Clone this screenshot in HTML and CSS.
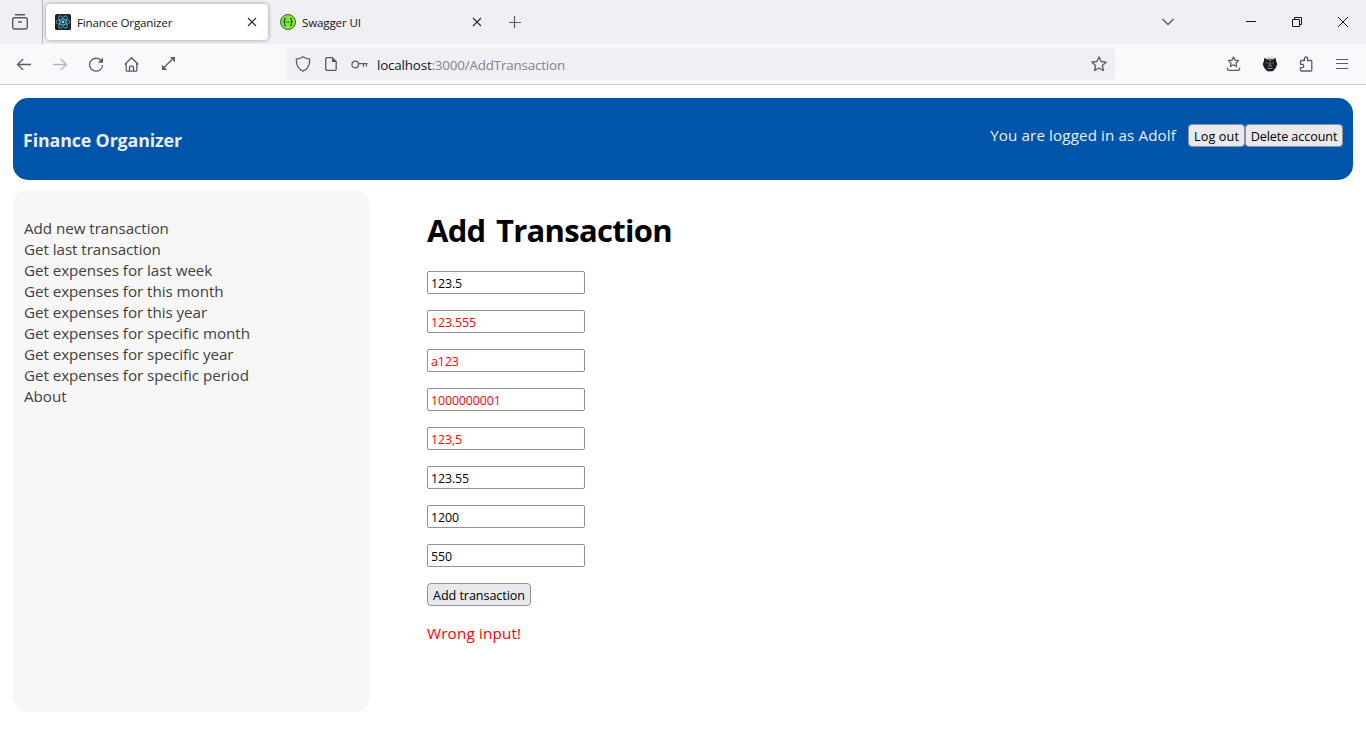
FILE: index.html
```html
<!DOCTYPE html>
<html lang="en">
<head>
<meta charset="utf-8">
<title>Finance Organizer</title>
<link rel="stylesheet" href="styles.css">
</head>
<body>
<div class="tabbar">
  <div class="tabs-lead">
    <svg class="ic" width="18" height="18" viewBox="0 0 18 18"><path d="M4 1.700h10M3 4.700h12a1.300 1.300 0 0 1 1.300 1.300v8a2 2 0 0 1-2 2H3.700a2 2 0 0 1-2-2V6A1.300 1.300 0 0 1 3 4.700M7 9h4" stroke-width="1.400"/></svg>
  </div>
  <div class="tab active">
    <svg width="16" height="16" viewBox="0 0 16 16"><rect width="16" height="16" rx="1.500" fill="#20232a"/><g fill="none" stroke="#53b9d5" stroke-width=".8"><ellipse cx="8" cy="8" rx="7" ry="2.700"/><ellipse cx="8" cy="8" rx="7" ry="2.700" transform="rotate(60 8 8)"/><ellipse cx="8" cy="8" rx="7" ry="2.700" transform="rotate(120 8 8)"/></g><circle cx="8" cy="8" r="1.400" fill="#61dafb"/></svg>
    <span class="tab-title">Finance Organizer</span>
    <svg class="x" width="10" height="10" viewBox="0 0 10 10"><path d="M1 1l8 8M9 1L1 9"/></svg>
  </div>
  <div class="tab">
    <svg width="16" height="16" viewBox="0 0 16 16"><circle cx="8" cy="8" r="7.500" fill="#85ea2d" stroke="#3d5a4a"/><g fill="none" stroke="#173647" stroke-width="1.100"><path d="M6 4.300c-1.500 0-1.400.7-1.400 2C4.600 7.500 4.200 8 3.300 8c.9 0 1.300.5 1.300 1.700 0 1.300-.1 2 1.400 2M10 4.300c1.500 0 1.400.7 1.400 2 0 1.200.4 1.700 1.300 1.700-.9 0-1.300.5-1.300 1.700 0 1.300.1 2-1.400 2"/><path d="M5.800 8h4.600" stroke-dasharray="1.200 .6"/></g></svg>
    <span class="tab-title">Swagger UI</span>
    <svg class="x" width="10" height="10" viewBox="0 0 10 10"><path d="M1 1l8 8M9 1L1 9"/></svg>
  </div>
  <svg class="ic plus" width="12" height="12" viewBox="0 0 12 12"><path d="M5.500 0v12M0 6.500h12" stroke-width="1.200"/></svg>
  <svg class="ic chev" width="14" height="8" viewBox="0 0 14 8"><path d="M1.500 1L7 6.500 12.500 1" stroke-width="1.400"/></svg>
  <div class="window-buttons">
    <svg width="10" height="10" viewBox="0 0 10 10"><path d="M0 4.500h10"/></svg>
    <svg width="10" height="10" viewBox="0 0 10 10"><path d="M.5 2.500h7v7h-7zM2.500 2.500v-2h7v7h-2"/></svg>
    <svg width="10" height="10" viewBox="0 0 10 10"><path d="M0 0l10 10M10 0L0 10"/></svg>
  </div>
</div>
<div class="navbar">
  <div class="nav-left">
    <svg class="ic" width="16" height="16" viewBox="0 0 16 16"><path d="M15 8.500H1.500M7.200 3L1.500 8.500l5.700 5.500"/></svg>
    <svg class="ic dim" width="16" height="16" viewBox="0 0 16 16"><path d="M1 8.500h13.500M8.800 3l5.700 5.500L8.800 14"/></svg>
    <svg class="ic" width="16" height="16" viewBox="0 0 16 16"><path d="M14.600 8.900A6.500 6.500 0 1 1 12.600 4"/><path d="M15 1.500v5.200H9.800z" fill="#5b5b66" stroke="none"/></svg>
    <svg class="ic" width="16" height="16" viewBox="0 0 16 16"><path d="M.8 8.500L7.500 1.700l6.900 6.800M2.200 7.500v6.700a1 1 0 0 0 1 1h8.600a1 1 0 0 0 1-1V7.500M5.500 15v-3.800a1 1 0 0 1 1-1h2a1 1 0 0 1 1 1V15"/></svg>
    <svg class="ic" width="16" height="16" viewBox="0 0 16 16"><path d="M4 11.500l8-8"/><path d="M9.800 1H15v5.200zM2 8.800V14h5.200z" fill="#5b5b66" stroke="none"/></svg>
  </div>
  <div class="urlbar">
    <svg class="ic" width="16" height="16" viewBox="0 0 16 16"><path d="M8 .8c2 1.500 4.100 2 6.600 2.300.3 5.500-1.300 9.900-6.600 12.100C2.700 13 1.100 8.600 1.400 3.100 3.900 2.800 6 2.300 8 .8z"/></svg>
    <svg class="ic doc" width="12" height="14" viewBox="0 0 12 14"><path d="M1.700.7h5.500l4 4v7.600a1 1 0 0 1-1 1H1.700a1 1 0 0 1-1-1V1.700a1 1 0 0 1 1-1z"/><path d="M7 0v5h5z" fill="#5b5b66" stroke="none"/></svg>
    <svg class="ic key" width="17" height="9" viewBox="0 0 17 9"><circle cx="4.200" cy="4.500" r="3.300"/><path d="M7.500 3.700h9M12.500 4v3M15.500 4v2.500" stroke-width="1.200"/></svg>
    <span class="url"><b>localhost</b>:3000/AddTransaction</span>
    <svg class="ic star" width="16" height="16" viewBox="0 0 16 16"><path d="M8 .9l2.100 4.600 5.100.6-3.800 3.400 1 5-4.400-2.500-4.400 2.500 1-5L.8 6.100l5.100-.6z" stroke-linejoin="round"/></svg>
  </div>
  <div class="nav-right">
    <svg class="ic" width="16" height="16" viewBox="0 0 16 16"><path d="M7.500 1L9 4.100l3.500.5L10 7l.6 3.500-3.100-1.700-3.100 1.700L5 7 2.500 4.600 6 4.100z" stroke-linejoin="round"/><path d="M1.500 11.500v1.200a1.600 1.600 0 0 0 1.600 1.600h8.900a1.600 1.600 0 0 0 1.600-1.600v-1.200"/></svg>
    <svg width="16" height="16" viewBox="0 0 16 16"><circle cx="8" cy="8" r="7.400" fill="#d8cfd1"/><path d="M2.300 1.800L5 3.600q3-.6 6 0l2.700-1.800.3 3 1.200 3.500-1.600 3.700-2.800 3.200H5.200L2.400 12 .8 8.300 2 5z" fill="#1b1d20"/><path d="M3.800 6.200l2.700 1.500M12.200 6.200L9.500 7.700" stroke="#657073"/><path d="M7 4.500h2M8 6v3.500M6 10.500l2-1 2 1M5.500 12.500h5" stroke="#a3adb0" stroke-width=".8" fill="none"/></svg>
    <svg class="ic" width="16" height="16" viewBox="0 0 16 16"><path d="M2.500 7V5.500a1 1 0 0 1 1-1h2.900V2.600a1.600 1.600 0 0 1 3.200 0v1.900h3.200a1 1 0 0 1 1 1V14a1 1 0 0 1-1 1H3.500a1 1 0 0 1-1-1v-2.300h1.600a1.700 1.700 0 0 0 0-3.400H2.500z"/></svg>
    <svg class="ic menu" width="14" height="12" viewBox="0 0 14 12"><path d="M1 1.500h12M1 5.500h12M1 10.500h12" stroke-width="1.200"/></svg>
  </div>
</div>
<main class="page">
  <header class="banner">
    <h2 class="brand">Finance Organizer</h2>
    <div class="account">
      <span class="who">You are logged in as Adolf</span>
      <button class="btn b-out"><span>Log out</span></button><button class="btn b-del"><span>Delete account</span></button>
    </div>
  </header>
  <div class="columns">
    <nav class="side">
      <a>Add new transaction</a>
      <a>Get last transaction</a>
      <a>Get expenses for last week</a>
      <a>Get expenses for this month</a>
      <a>Get expenses for this year</a>
      <a>Get expenses for specific month</a>
      <a>Get expenses for specific year</a>
      <a>Get expenses for specific period</a>
      <a>About</a>
    </nav>
    <section class="content">
      <h1 class="title">Add Transaction</h1>
      <div class="form">
        <input class="field" value="123.5">
        <input class="field bad" value="123.555">
        <input class="field bad" value="a123">
        <input class="field bad" value="1000000001">
        <input class="field bad" value="123,5">
        <input class="field" value="123.55">
        <input class="field" value="1200">
        <input class="field" value="550">
        <button class="btn b-add"><span>Add transaction</span></button>
      </div>
      <p class="error">Wrong input!</p>
    </section>
  </div>
</main>
</body>
</html>
```
FILE: styles.css
```css
* { box-sizing: border-box; }
body {
  margin: 0;
  height: 738px;
  overflow: hidden;
  background: #fff;
  font-family: "Open Sans", "Noto Sans", sans-serif;
  font-size: 15.2px;
}
svg { display: block; flex: none; }
.ic { fill: none; stroke: #5b5b66; stroke-width: 1.3; }
.ic.dim { opacity: .42; }

.tabbar { display: flex; align-items: center; height: 44px; background: #f0eff4; }
.tabs-lead { width: 43px; height: 44px; padding: 13px 0 0 11px; border-right: 1px solid #b9b8be; }
.tab { display: flex; align-items: center; width: 222px; height: 36px; margin-left: 3px; padding: 0 11px 0 9px; border-radius: 4px; }
.tab.active { background: #fff; box-shadow: 0 0 4px rgba(0, 0, 0, .38); }
.tab-title { margin-left: 6px; padding-top: 2px; font-size: 11.6px; line-height: 16px; letter-spacing: -.15px; color: #15141a; white-space: nowrap; }
.x { margin-left: auto; fill: none; stroke: #2b2a33; stroke-width: 1.1; }
.plus { margin-left: 16px; }
.chev { margin-left: auto; }
.window-buttons { display: flex; gap: 36px; margin: 0 18px 0 71px; }
.window-buttons svg { fill: none; stroke: #15141a; stroke-width: 1; }

.navbar { display: flex; align-items: center; height: 41px; background: #f9f9fb; border-bottom: 1px solid #cccccf; }
.nav-left { display: flex; gap: 20px; width: 287px; padding-left: 16px; }
.urlbar { display: flex; align-items: center; width: 828px; height: 32px; padding: 0 8px; border-radius: 4px; background: #f0eff4; }
.doc { margin-left: 14px; }
.key { margin-left: 14px; }
.url { margin-left: 9px; padding-top: 2px; font-size: 13.4px; letter-spacing: -.18px; color: #85848a; white-space: nowrap; }
.url b { font-weight: 400; color: #15141a; }
.star { margin-left: auto; }
.nav-right { display: flex; align-items: center; gap: 20px; margin-left: 111px; }
.menu { margin-left: 1px; }

.page { margin: 13px 13px 0; }
.banner { display: flex; justify-content: space-between; height: 82px; padding: 0 10px; border-radius: 15px; background: #0055ab; color: #ececf0; }
.brand { margin: 30px 0 0; font-size: 17.8px; line-height: 24px; letter-spacing: -.12px; white-space: nowrap; }
.account { display: flex; align-items: flex-start; padding-top: 26px; }
.who { margin-right: 12px; line-height: 22px; letter-spacing: .11px; white-space: nowrap; }
.btn { height: 23px; padding: 0; border: 1px solid #8f8f9d; border-radius: 4px; background: #e9e9ed; color: #000; font-family: inherit; font-size: 12.6px; line-height: 21px; letter-spacing: -.08px; white-space: nowrap; }
.btn span { position: relative; top: 1px; }
.b-out { width: 57px; letter-spacing: .15px; }
.b-del { width: 98px; }
.b-add { width: 104px; }

.columns { display: flex; gap: 57px; margin-top: 10px; }
.side { display: flex; flex-direction: column; width: 357px; height: 522px; padding: 28px 11px; border-radius: 15px; background: #f7f7f7; color: #404040; line-height: 21px; letter-spacing: -.05px; }
.title { margin: 18px 0 0; font-size: 31px; line-height: 44px; letter-spacing: -.7px; word-spacing: 3px; white-space: nowrap; }
.form { display: flex; flex-direction: column; align-items: flex-start; gap: 16px; margin-top: 19px; }
.field { width: 158px; height: 23px; padding: 2px 3px 0; border: 1px solid #8f8f9d; border-radius: 2px; background: #fff; color: #000; font-family: inherit; font-size: 12.4px; letter-spacing: -.12px; outline: none; }
.field.bad { color: #f00; }
.error { margin: 17px 0 0; line-height: 21px; letter-spacing: .18px; color: #f00; }
```
